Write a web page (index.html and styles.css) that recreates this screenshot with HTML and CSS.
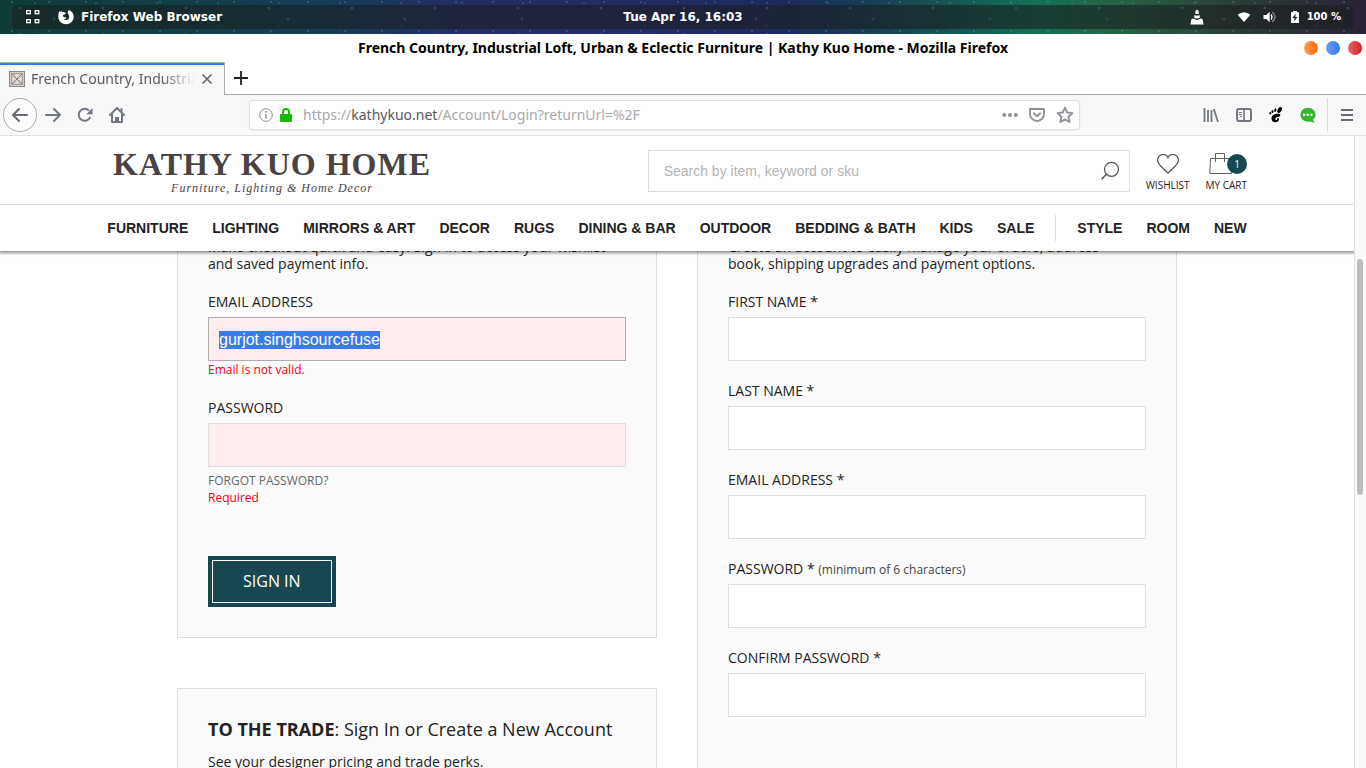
FILE: index.html
```html
<!DOCTYPE html>
<html lang="en">
<head>
<meta charset="utf-8">
<title>French Country, Industrial Loft, Urban &amp; Eclectic Furniture | Kathy Kuo Home</title>
<link rel="stylesheet" href="styles.css">
</head>
<body>
<div class="desktop-bar">
  <div class="desktop-bar-inner">
    <div class="desktop-left">
      <svg class="apps-icon" width="14" height="14" viewBox="0 0 14 14" fill="none" stroke="#fff" stroke-width="1.3"><rect x=".7" y=".7" width="3.6" height="3"/><rect x="9.2" y=".7" width="3.6" height="3"/><rect x=".7" y="9.7" width="3.6" height="3"/><rect x="9.2" y="9.7" width="3.6" height="3"/></svg>
      <svg width="16" height="16" viewBox="0 0 16 16"><path fill="#fff" d="M1.2 1.8 2 3.3 3.6 1.4 4 3.1C6 2.7 7.5 3.5 8 4.3L6.5 5.5 5 6.1 5.4 7.9 8.4 8.4C8 10 6.8 10.2 5.6 9.8 7.2 12 11.4 11.2 11.2 7.7 11.1 5.5 9.6 5 9.6 3.8L10.5 1C14 2 16 5 15.7 8.7A7.7 7.3 0 0 1 .4 9C.1 6 .8 4 1.2 1.8Z"/></svg>
      <span class="app-name">Firefox Web Browser</span>
    </div>
    <time class="clock" datetime="16:03">Tue Apr 16, 16:03</time>
    <div class="desktop-right">
      <svg class="cone-icon" width="14" height="16" viewBox="0 0 14 16"><path fill="#fff" d="M5.7 1.5Q7 .2 8.3 1.5L9 4.5Q7 5.5 5 4.5ZM4.6 6Q7 7.3 9.4 6L10 8.4Q7 10.4 4 8.4ZM3.6 9.6Q7 12.2 10.4 9.6L12.5 10 13.6 15.5H.4L1.5 10Z"/></svg>
      <svg class="wifi-icon" width="14" height="12" viewBox="0 0 14 12"><path fill="#fff" d="M.6 3.8Q7-1.2 13.4 3.8L7 11Z"/></svg>
      <svg class="volume-icon" width="14" height="12" viewBox="0 0 14 12"><path fill="#fff" d="M.5 4h2.7L6.7.8v10.5L3.2 8H.5Z"/><path d="M8 3.5q2 2.5 0 5" stroke="#fff" fill="none" stroke-width="1.3"/><path d="M9.2 1q5.600 5 0 10" stroke="#8b8b8b" fill="none" stroke-width="1.3"/></svg>
      <svg class="battery-icon" width="10" height="13" viewBox="0 0 10 13"><path fill="#fff" d="M3 0h4v1.3h2V12H1V1.300h2Z"/><path fill="#242427" d="M5.800 2.600 2.300 7h2.300l-.6 3.500L7.600 6H5.300Z"/></svg>
      <span class="battery-level">100 %</span>
    </div>
  </div>
</div>
<header class="window-title">
  <span class="window-name">French Country, Industrial Loft, Urban &amp; Eclectic Furniture | Kathy Kuo Home - Mozilla Firefox</span>
  <div class="window-buttons">
    <button class="dot dot-min" aria-label="Minimize"></button>
    <button class="dot dot-max" aria-label="Maximize"></button>
    <button class="dot dot-close" aria-label="Close"></button>
  </div>
</header>
<div class="tab-strip">
  <div class="tab">
    <svg width="16" height="16" viewBox="0 0 16 16" fill="none"><rect x=".5" y=".5" width="15" height="15" fill="#d6d0cd" stroke="#8f8986"/><rect x="2.500" y="2.500" width="11" height="11" stroke="#a39d9a"/><path stroke="#8a8380" d="m3 3 10 10M13 3 3 13"/><path stroke="#f3f1f0" d="M8 3.500v2M8 10.500v2M3.500 8h2M10.500 8h2"/></svg>
    <span class="tab-label">French Country, Industrial</span>
    <button class="icon-button" aria-label="Close tab"><svg width="12" height="12" viewBox="0 0 12 12" stroke="#686b72" stroke-width="1.7"><path d="m1.500 1.500 9 9m0-9-9 9"/></svg></button>
  </div>
  <button class="icon-button new-tab" aria-label="New tab"><svg width="14" height="14" viewBox="0 0 14 14" stroke="#202124" stroke-width="1.8"><path d="M7 0v14M0 7h14"/></svg></button>
</div>
<div class="toolbar">
  <div class="nav-buttons">
    <button class="icon-button back" aria-label="Back"><svg width="18" height="18" viewBox="0 0 18 18" fill="none" stroke="#686c75" stroke-width="2" stroke-linecap="round" stroke-linejoin="round"><path d="M2 9h14M8 3 2 9l6 6"/></svg></button>
    <button class="icon-button" aria-label="Forward"><svg width="18" height="18" viewBox="0 0 18 18" fill="none" stroke="#737780" stroke-width="2" stroke-linecap="round" stroke-linejoin="round"><path d="M2 9h14m-6-6 6 6-6 6"/></svg></button>
    <button class="icon-button" aria-label="Reload"><svg width="16" height="16" viewBox="0 0 16 16" fill="none" stroke="#737780" stroke-width="2"><path d="M13.200 10.200A6 6 0 1 1 12 3.600"/><path fill="#737780" stroke="none" d="M15.500 1v6.200H9.300Z"/></svg></button>
    <button class="icon-button" aria-label="Home"><svg width="18" height="18" viewBox="0 0 18 18" fill="none" stroke="#737780" stroke-width="2" stroke-linejoin="round" stroke-linecap="round"><path d="m2 9 7-7 7 7M4 8v8h10V8M13.500 3v3"/><path fill="#737780" stroke="none" d="M7 17v-6h4v6Z"/></svg></button>
  </div>
  <div class="url-bar">
    <svg width="14" height="14" viewBox="0 0 14 14" fill="none" stroke="#8b8c90"><circle cx="7" cy="7" r="6.300"/><path stroke-width="1.400" d="M7 3v1.700M7 6v4.500"/></svg>
    <svg width="12" height="14" viewBox="0 0 12 14"><path d="M3 7V4a3 3 0 0 1 6 0v3" fill="none" stroke="#12bc00" stroke-width="2"/><rect y="6" width="12" height="8" rx="1" fill="#12bc00"/></svg>
    <span class="url">https://<b>kathykuo.net</b>/Account/Login?returnUrl=%2F</span>
    <button class="icon-button" aria-label="Page actions"><svg width="16" height="6" viewBox="0 0 16 6" fill="#8f9197"><circle cx="2.200" cy="3" r="2"/><circle cx="8" cy="3" r="2"/><circle cx="13.800" cy="3" r="2"/></svg></button>
    <button class="icon-button" aria-label="Save to Pocket"><svg width="16" height="15" viewBox="0 0 16 15" fill="none" stroke="#8f9197" stroke-width="1.900"><path stroke-linejoin="round" d="M1 1h14v5a7 7 0 0 1-14 0Z"/><path stroke-linecap="round" stroke-linejoin="round" d="m4.800 5.300 3.200 3 3.200-3"/></svg></button>
    <button class="icon-button" aria-label="Bookmark"><svg width="18" height="18" viewBox="0 0 18 18" fill="none" stroke="#8f9197" stroke-width="1.900" stroke-linejoin="round"><path d="m9 1.600 2.200 4.900 5.200.6-3.900 3.600 1.100 5.300L9 13.400 4.400 16l1.100-5.300-3.900-3.600 5.200-.6Z"/></svg></button>
  </div>
  <div class="tool-buttons">
    <button class="icon-button" aria-label="Library"><svg width="16" height="14" viewBox="0 0 16 14" fill="none" stroke="#737780" stroke-width="1.800"><path d="M1.500 0v14M5 2v12M8.500 2v12M10.800 1l4.200 13"/></svg></button>
    <button class="icon-button" aria-label="Sidebar"><svg width="16" height="14" viewBox="0 0 16 14" fill="none" stroke="#737780"><rect x="1" y="1" width="14" height="12" rx="2" stroke-width="2"/><path stroke-width="1.600" d="M8 1v12"/><path d="M3 4.500h3M3 6.500h3M4 8.500h2"/></svg></button>
    <button class="icon-button" aria-label="GNOME Shell"><svg width="14" height="16" viewBox="0 0 14 16"><ellipse cx="10.600" cy="3" rx="1.900" ry="3.100" transform="rotate(32 10.600 3)"/><ellipse cx="6.300" cy="3.100" rx="1.100" ry="1.900" transform="rotate(12 6.300 3.100)"/><ellipse cx="3.500" cy="4.400" rx="1" ry="1.500"/><ellipse cx="1.300" cy="6.300" rx=".9" ry="1.200"/><path d="M10.500 7C6.500 5.900 2.400 8 2.500 11.400S6 16 8.400 14.800c1.600-.8 1.800-2.700 1.300-3.400-.5-.8-1.500-.4-1.400.4.100.9-.5 1.400-1.300.9C5.200 11.600 7 10.500 9 10c2.300-.6 3.200-2.300 1.500-3Z"/></svg></button>
    <button class="icon-button" aria-label="Chat"><svg width="16" height="17" viewBox="0 0 16 17"><path fill="#37b42d" d="M8 .8c4.200 0 7.500 3 7.500 6.900 0 2-1 3.900-2.500 5.100l1.700 3.300-4.500-1.700C5 15.600.5 12.300.5 7.700.5 3.800 3.800.8 8 .8Z"/><g fill="#fff"><circle cx="4.200" cy="7.800" r="1.200"/><circle cx="7.800" cy="7.800" r="1.200"/><circle cx="11.400" cy="7.800" r="1.200"/></g></svg></button>
  </div>
  <div class="menu-area"><button class="icon-button" aria-label="Menu"><svg width="14" height="14" viewBox="0 0 14 14" stroke="#686c75" stroke-width="2"><path d="M1 2h12M1 7h12M1 12h12"/></svg></button></div>
</div>
<div class="viewport">
  <div class="page">
    <header class="site-header">
      <div class="brand-row">
        <a class="logo" href="#"><span class="logo-name">KATHY KUO HOME</span><span class="logo-tagline">Furniture, Lighting &amp; Home Decor</span></a>
        <div class="header-tools">
          <form class="search">
            <input type="text" aria-label="Search" placeholder="Search by item, keyword or sku">
            <button class="icon-button" type="button" aria-label="Search"><svg width="20" height="20" viewBox="0 0 20 20" fill="none" stroke="#555"><circle cx="11.500" cy="8.300" r="7" stroke-width="1.300"/><path stroke-width="1.600" d="m6.500 13.200-5 5"/></svg></button>
          </form>
          <a class="shortcut" href="#"><svg width="24" height="22" viewBox="0 0 24 22" fill="none" stroke="#505050" stroke-width="1.200"><path d="M12 4.500C10-.2 2 .7 1.500 7c-.2 4.500 5.500 8 10.500 13 5-5 10.700-8.500 10.500-13C22 .7 14 -.2 12 4.500Z"/></svg><span>WISHLIST</span></a>
          <a class="shortcut cart" href="#"><svg width="24" height="22" viewBox="0 0 24 22" fill="none" stroke="#626262"><path d="M1.500 5.500h20l1 15H.8Z"/><path d="M6.500 9V.500h9V9"/></svg><span class="count">1</span><span>MY CART</span></a>
        </div>
      </div>
      <nav class="site-nav">
        <div class="nav-group">
          <a href="#">FURNITURE</a><a href="#">LIGHTING</a><a href="#">MIRRORS &amp; ART</a><a href="#">DECOR</a><a href="#">RUGS</a><a href="#">DINING &amp; BAR</a><a href="#">OUTDOOR</a><a href="#">BEDDING &amp; BATH</a><a href="#">KIDS</a><a href="#">SALE</a>
        </div>
        <div class="nav-group nav-extra"><a href="#">STYLE</a><a href="#">ROOM</a><a href="#">NEW</a></div>
      </nav>
    </header>
    <main class="account">
      <div class="column">
        <section class="panel">
          <p>Make checkout quick and easy. Sign in to access your wishlist and saved payment info.</p>
          <form class="fields">
            <div class="field"><label for="login-email">EMAIL ADDRESS</label><input class="invalid" id="login-email" type="text" value="gurjot.singhsourcefuse" autofocus><span class="error">Email is not valid.</span></div>
            <div class="field"><label for="login-password">PASSWORD</label><input class="invalid" id="login-password" type="password"><a class="forgot" href="#">FORGOT PASSWORD?</a><span class="error">Required</span></div>
            <button class="sign-in" type="button"><span>SIGN IN</span></button>
          </form>
        </section>
        <section class="panel trade">
          <h2><b>TO THE TRADE</b>: Sign In or Create a New Account</h2>
          <p>See your designer pricing and trade perks.</p>
        </section>
      </div>
      <section class="panel">
        <p>Create an account to easily manage your orders, address book, shipping upgrades and payment options.</p>
        <form class="fields">
          <div class="field"><label for="first-name">FIRST NAME *</label><input id="first-name" type="text"></div>
          <div class="field"><label for="last-name">LAST NAME *</label><input id="last-name" type="text"></div>
          <div class="field"><label for="email">EMAIL ADDRESS *</label><input id="email" type="text"></div>
          <div class="field"><label for="password">PASSWORD * <small>(minimum of 6 characters)</small></label><input id="password" type="password"></div>
          <div class="field"><label for="confirm">CONFIRM PASSWORD *</label><input id="confirm" type="password"></div>
        </form>
      </section>
    </main>
  </div>
  <div class="scroll-track"><div class="scroll-thumb"></div></div>
</div>
<script src="main.js"></script>
</body>
</html>
```
FILE: main.js
```js
const email = document.getElementById("login-email");
email.focus({ preventScroll: true });
email.select();
```
FILE: styles.css
```css
* { box-sizing: border-box; }

body {
  margin: 0;
  height: 100vh;
  display: flex;
  flex-direction: column;
  overflow: hidden;
  background: #fff;
  color: #222;
  font: 14px/17px "Open Sans", sans-serif;
}

button, input { font: inherit; margin: 0; }
a { color: inherit; text-decoration: none; }
p, h2 { margin: 0; }
svg { display: block; flex: none; }

.icon-button {
  display: flex;
  align-items: center;
  justify-content: center;
  flex: none;
  padding: 0;
  border: 0;
  background: none;
}

/* Desktop panel */
.desktop-bar {
  flex: none;
  height: 34px;
  padding: 5px 12px;
  color: #fff;
  font: bold 12px/24px "DejaVu Sans", sans-serif;
  background:
    radial-gradient(circle at 20px 8px, #8ab5b4 0, transparent 2px) 0 0 / 83px 27px,
    radial-gradient(circle at 54px 19px, #7294b1 0, transparent 2px) 0 0 / 117px 31px,
    radial-gradient(circle at 35px 3px, #6f90ad 0, transparent 1px) 0 0 / 61px 23px,
    radial-gradient(circle at 12px 2px, #7fa0b5 0, transparent 1px) 0 0 / 37px 29px,
    linear-gradient(90deg, #0e3d37 0%, #124047 12%, #173e57 24%, #262c66 35%, #242a62 48%, #1c2b5a 58%, #175052 68%, #127155 76%, #276244 82%, #2c4038 90%, #292135 100%);
}
.desktop-bar-inner {
  height: 24px;
  display: grid;
  grid-template-columns: 1fr auto 1fr;
  align-items: center;
  border-radius: 5px;
  background: rgba(26, 30, 32, .6);
}
.desktop-left, .desktop-right { display: flex; align-items: center; }
.desktop-left { padding-left: 14px; }
.apps-icon { margin-right: 18px; }
.app-name { margin-left: 7px; }
.desktop-right { justify-content: flex-end; padding-right: 13px; }
.cone-icon { margin-right: 33px; }
.wifi-icon { margin-right: 12px; }
.volume-icon { margin-right: 13px; }
.battery-icon { margin-right: 7px; }
.battery-level { font-size: 10px; }

/* Window frame */
.window-title {
  flex: none;
  height: 28px;
  display: flex;
  align-items: center;
  color: #000;
  font: bold 14px/28px "Noto Sans", sans-serif;
}
.window-name { flex: 1; padding-left: 62px; text-align: center; white-space: nowrap; }
.window-buttons { display: flex; gap: 8px; padding-right: 4px; }
.dot { width: 14px; height: 14px; padding: 0; border: 0; border-radius: 50%; }
.dot-min { background: linear-gradient(90deg, #ff9a55, #ff6b08); }
.dot-max { background: linear-gradient(90deg, #6c9ff5, #3177f0); }
.dot-close { background: linear-gradient(90deg, #ea666b, #d81e25); }

.tab-strip { flex: none; height: 33px; display: flex; border-bottom: 1px solid #adadad; }
.tab {
  width: 225px;
  height: 33px;
  display: flex;
  align-items: center;
  gap: 6px;
  padding: 0 11px 0 9px;
  border-top: 1px solid #adadad;
  border-right: 1px solid #adadad;
  background: linear-gradient(#2f7bea 2px, #f9f9fa 2px);
}
.tab-label {
  flex: 1;
  overflow: hidden;
  white-space: nowrap;
  color: #595b62;
  font: 14px/20px "Noto Sans", sans-serif;
  mask-image: linear-gradient(90deg, #000 80%, transparent);
}
.new-tab { margin-left: 9px; }

.toolbar {
  flex: none;
  height: 41px;
  display: flex;
  align-items: center;
  border-bottom: 1px solid #e0e0e1;
  background: #f9f9fa;
}
.nav-buttons { display: flex; align-items: center; gap: 15px; width: 249px; padding-left: 3px; }
.nav-buttons .back { width: 34px; height: 34px; margin-right: -8px; border: 1px solid #ababad; border-radius: 50%; background: #fdfdfd; }
.url-bar {
  flex: 1;
  height: 30px;
  display: flex;
  align-items: center;
  padding: 0 5px 0 9px;
  gap: 7px;
  border: 1px solid #dededf;
  border-radius: 4px;
  background: #fff;
  box-shadow: 0 1px 3px rgba(0, 0, 0, .05);
}
.url { flex: 1; padding-left: 4px; color: #a8a8ac; font: 14px/20px "Noto Sans", sans-serif; white-space: nowrap; }
.url b { color: #55575d; font-weight: normal; }
.url-bar .icon-button { margin-left: 4px; }
.tool-buttons { display: flex; align-items: center; justify-content: flex-end; gap: 17px; width: 247px; padding-right: 11px; }
.menu-area { width: 39px; height: 34px; display: flex; align-items: center; justify-content: center; border-left: 1px solid #d9d9db; }

/* Page viewport */
.viewport { flex: 1; min-height: 0; display: flex; }
.page { flex: 1; min-width: 0; overflow: hidden; }
.scroll-track { width: 12px; flex: none; padding: 123px 3px 0 2px; border-left: 1px solid #dededf; background: #fafafa; }
.scroll-thumb { height: 236px; border-radius: 3px; background: #bcbdc2; }

.site-header {
  position: relative;
  z-index: 1;
  background: #fff;
  box-shadow: 0 1px 3px 1px rgba(0, 0, 0, .45);
}
.brand-row {
  max-width: 1140px;
  height: 68px;
  margin: 0 auto;
  display: flex;
  align-items: center;
  justify-content: space-between;
}
.logo {
  display: flex;
  flex-direction: column;
  align-items: center;
  padding: 2px 0 0 6px;
  color: #494342;
  font-family: "Liberation Serif", serif;
}
.logo-name { font-size: 32px; line-height: 34px; font-weight: bold; letter-spacing: 1px; }
.logo-tagline { font-size: 12px; line-height: 14px; font-style: italic; letter-spacing: 1px; }
.header-tools { display: flex; align-items: center; padding-top: 2px; }
.search { width: 482px; height: 42px; display: flex; padding-right: 9px; margin-right: 16px; border: 1px solid #dcdcdc; }
.search input {
  flex: 1;
  padding: 0 15px;
  border: 0;
  outline: 0;
  background: none;
  font: 14px/17px "Liberation Sans", sans-serif;
}
.search input::placeholder { color: #b4b4b4; opacity: 1; }
.shortcut {
  position: relative;
  display: flex;
  flex-direction: column;
  align-items: center;
  gap: 3px;
  padding-top: 3px;
  font-size: 10px;
  line-height: 15px;
}
.cart { align-items: flex-start; margin-left: 16px; }
.cart svg { margin-left: 3px; }
.count {
  position: absolute;
  top: 4px;
  right: 0;
  width: 20px;
  height: 20px;
  border-radius: 50%;
  background: #174851;
  color: #fff;
  line-height: 20px;
  text-align: center;
}
.site-nav {
  height: 47px;
  display: flex;
  justify-content: center;
  align-items: center;
  border-top: 1px solid #dedede;
  font: bold 14px/26px "Liberation Sans", sans-serif;
  white-space: nowrap;
}
.nav-group { display: flex; gap: 24px; }
.nav-extra { margin-left: 21px; padding-left: 21px; border-left: 1px solid #dcdcdc; }

.account {
  max-width: 1000px;
  margin: -44px auto 0;
  display: grid;
  grid-template-columns: 1fr 1fr;
  gap: 40px;
}
.column { display: flex; flex-direction: column; gap: 50px; }
.panel { padding: 30px; border: 1px solid #dedede; background: #fbfbfb; }
.panel p { padding-right: 16px; }
.trade { min-height: 200px; }
.fields { display: flex; flex-direction: column; gap: 21px; margin-top: 21px; }
.field { display: flex; flex-direction: column; }
.field input {
  height: 44px;
  margin-top: 7px;
  padding: 1px 10px 0;
  border: 1px solid #dedede;
  border-radius: 0;
  outline: 0;
  background: #fff;
  color: #222;
  font: 16px/19px "Liberation Sans", sans-serif;
}
.field .invalid { background: #ffeded; }
.field input:focus { border-color: #adadad; }
.field input::selection { background: rgba(53, 121, 240, .99); color: #fff; }
.field small { color: #444; font-size: 12px; line-height: 12px; }
.error, .forgot { font-size: 12px; }
.error { color: #f50010; }
.forgot { margin-top: 5px; color: #666; }
.sign-in {
  align-self: flex-start;
  margin-top: 29px;
  padding: 4px;
  border: 0;
  border-radius: 0;
  background: #174851;
  color: #fff;
  font: 16px/19px "Open Sans", sans-serif;
}
.sign-in span { display: block; padding: 11px 30px; border: 1px solid #fff; }
.trade h2 { margin-bottom: 13px; font-size: 18px; line-height: 21px; font-weight: normal; }
```
